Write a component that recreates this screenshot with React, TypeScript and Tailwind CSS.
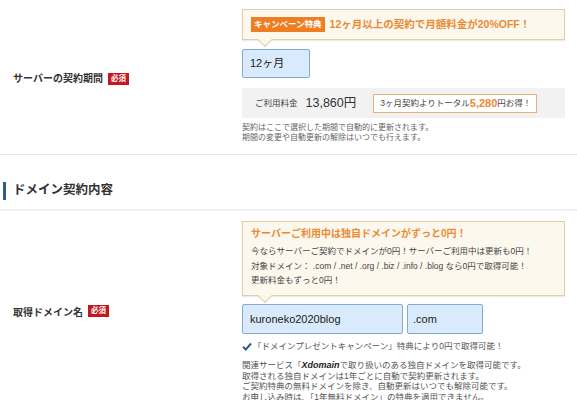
import React from "react";

const FONT = { fontFamily: '"Liberation Sans", "Noto Sans CJK JP", sans-serif' };

function Required() {
  return (
    <span className="ml-[5px] inline-flex h-[12px] items-center bg-[#c8161d] px-[3px] text-[7.5px] font-bold leading-none text-white">
      必須
    </span>
  );
}

function Tail({ bg, border }: { bg: string; border: string }) {
  return (
    <span
      className="absolute left-[17px] bottom-[-6px] h-[10px] w-[10px] rotate-45 border-r border-b"
      style={{ background: bg, borderColor: border }}
    />
  );
}

export default function App() {
  return (
    <div className="h-[400px] w-[577px] overflow-hidden bg-white text-[#333]" style={FONT}>
      {/* Section 1 */}
      <div className="flex h-[155px] border-b border-[#e6e6e6]">
        <div className="flex w-[242px] items-center pl-[13px] pt-[3px]">
          <span className="whitespace-nowrap text-[10px] font-bold text-[#333]">サーバーの契約期間</span>
          <Required />
        </div>
        <div className="flex w-[323px] flex-col pt-[9px]">
          <div className="relative flex h-[31px] items-center border border-[#e4cda6] bg-[#fdf8ee] pl-[8px] shadow-[0_1px_1px_rgba(0,0,0,0.08)]">
            <span className="flex h-[15px] items-center whitespace-nowrap bg-[#ef7d22] px-[3px] text-[8.5px] font-bold text-white">
              キャンペーン特典
            </span>
            <span className="ml-[5px] whitespace-nowrap text-[10.5px] font-bold text-[#ec8a34]">
              12ヶ月以上の契約で月額料金が20%OFF！
            </span>
            <Tail bg="#fdf8ee" border="#e4cda6" />
          </div>
          <div className="mt-[9px] flex h-[29px] w-[68px] items-center rounded-[2px] border border-[#82aad4] bg-[#d8eafb] pl-[7px] text-[11px] text-[#222]">
            12ヶ月
          </div>
          <div className="mt-[10px] flex h-[30px] items-center whitespace-nowrap bg-[#f2f2f2] pl-[13px]">
            <span className="shrink-0 text-[8.5px] text-[#444]">ご利用料金</span>
            <span className="ml-[8px] shrink-0 text-[12.5px] text-[#333]">13,860円</span>
            <span className="ml-[17px] flex h-[19px] w-[164px] shrink-0 items-center border border-[#e2b27e] bg-white pl-[6px] text-[8.5px] text-[#444]">
              3ヶ月契約よりトータル
              <span className="text-[11px] font-bold text-[#ec8a34]">5,280</span>
              円お得！
            </span>
          </div>
          <div className="mt-[5px] whitespace-nowrap text-[8px] leading-[10px] text-[#666]">
            <div>契約はここで選択した期間で自動的に更新されます。</div>
            <div>期間の変更や自動更新の解除はいつでも行えます。</div>
          </div>
        </div>
      </div>

      {/* Heading */}
      <div className="flex h-[56px] items-end border-b-2 border-[#eef0f3] pb-[9px]">
        <div className="flex items-center">
          <span className="ml-[3px] h-[18px] w-[3px] bg-[#2e5f8e]" />
          <span className="ml-[7px] whitespace-nowrap text-[12.5px] font-bold text-[#333]">ドメイン契約内容</span>
        </div>
      </div>

      {/* Section 2 */}
      <div className="flex">
        <div className="flex w-[242px] items-start pl-[13px] pt-[94px]">
          <span className="whitespace-nowrap text-[10px] font-bold text-[#333]">取得ドメイン名</span>
          <Required />
        </div>
        <div className="flex w-[323px] flex-col pt-[10px]">
          <div className="relative h-[75px] border border-[#e4cda6] bg-[#fdf8ee] pl-[8px] pt-[5px] shadow-[0_1px_1px_rgba(0,0,0,0.08)]">
            <div className="whitespace-nowrap text-[10px] font-bold leading-[14px] text-[#ec8a34]">
              サーバーご利用中は独自ドメインがずっと0円！
            </div>
            <div className="mt-[3px] whitespace-nowrap text-[8.5px] leading-[14.5px] text-[#444]">
              <div>今ならサーバーご契約でドメインが0円！サーバーご利用中は更新も0円！</div>
              <div>対象ドメイン： .com / .net / .org / .biz / .info / .blog なら0円で取得可能！</div>
              <div>更新料金もずっと0円！</div>
            </div>
            <Tail bg="#fdf8ee" border="#e4cda6" />
          </div>
          <div className="mt-[8px] flex gap-[4px]">
            <div className="flex h-[30px] w-[161px] items-center rounded-[2px] border border-[#82aad4] bg-[#d8eafb] pl-[7px] text-[11px] text-[#222]">
              kuroneko2020blog
            </div>
            <div className="flex h-[30px] w-[76px] items-center rounded-[2px] border border-[#82aad4] bg-[#d8eafb] pl-[5px] text-[11px] text-[#222]">
              .com
            </div>
          </div>
          <div className="mt-[5px] flex items-center whitespace-nowrap text-[8.5px] leading-[14px] text-[#555]">
            <svg width="10" height="9" viewBox="0 0 10 9" className="mr-[1px]">
              <path d="M1 4.8 L3.8 7.5 L9 1.5" stroke="#2e5f8e" strokeWidth="2" fill="none" />
            </svg>
            「ドメインプレゼントキャンペーン」特典により0円で取得可能！
          </div>
          <div className="mt-[7px] whitespace-nowrap text-[8.5px] leading-[10.5px] text-[#555]">
            <div>
              関連サービス「<span className="text-[9px] font-bold italic text-[#222]">Xdomain</span>で取り扱いのある独自ドメインを取得可能です。
            </div>
            <div>取得される独自ドメインは1年ごとに自動で契約更新されます。</div>
            <div>ご契約特典の無料ドメインを除き、自動更新はいつでも解除可能です。</div>
            <div>お申し込み時は、「1年無料ドメイン」の特典を適用できません。</div>
          </div>
        </div>
      </div>
    </div>
  );
}
